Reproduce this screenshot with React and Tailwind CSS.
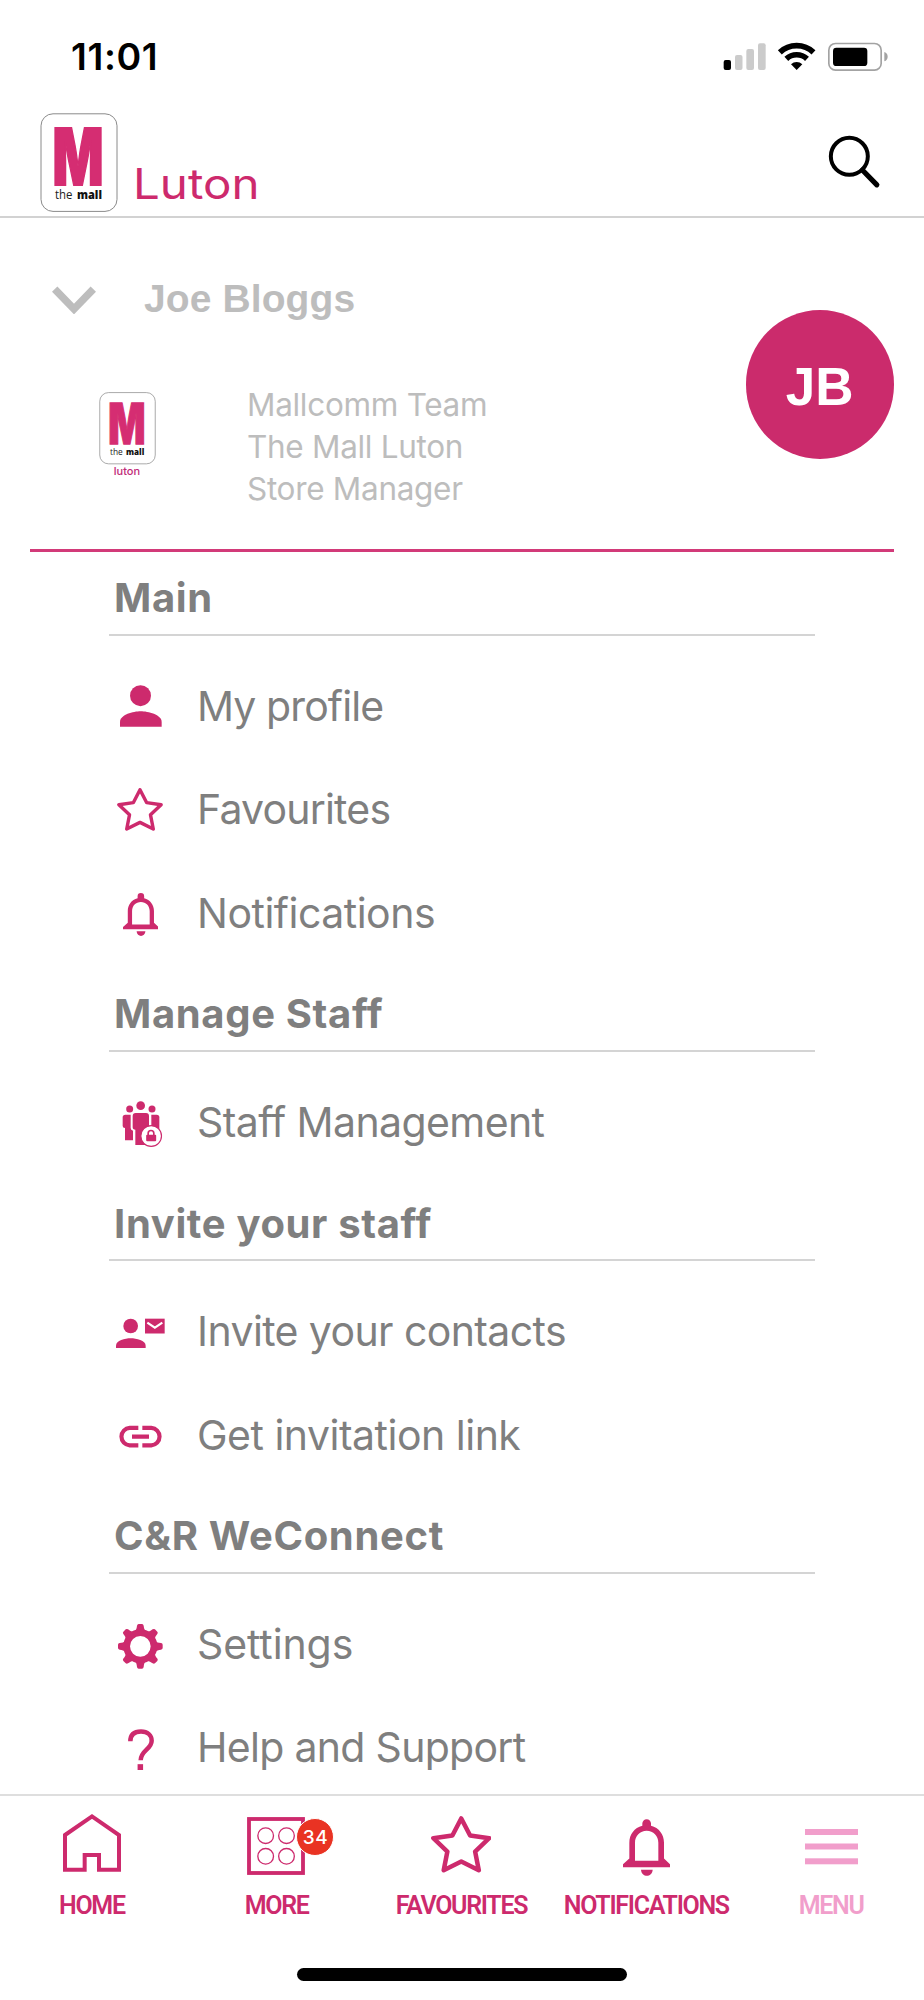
function MallLogo({ className }) {
  return (
    <svg className={`overflow-visible ${className}`} viewBox="0 0 78 100" fill="none">
      <rect x="1" y="0.800" width="76" height="97.600" rx="12" fill="#fff" stroke="#8a8a8a" strokeWidth="1" />
      <text
        x="11.500"
        y="71.700"
        transform="translate(14.6 0) scale(0.685 1) translate(-14.6 0)"
        fontFamily="Inter, sans-serif"
        fontWeight="900"
        fontSize="78"
        fill="#d52d72"
        stroke="#d52d72"
        strokeWidth="1.800"
      >
        M
      </text>
      <text x="15" y="86" fontFamily="'Open Sans', sans-serif" fontSize="13" fill="#222" textLength="17.500" lengthAdjust="spacingAndGlyphs">
        the
      </text>
      <text x="37" y="86" fontFamily="'Open Sans', sans-serif" fontWeight="800" fontSize="13" fill="#111" textLength="25" lengthAdjust="spacingAndGlyphs">
        mall
      </text>
    </svg>
  );
}

function Bell({ className }) {
  return (
    <svg className={className} viewBox="489 117 141 170" fill="currentColor">
      <path
        fillRule="evenodd"
        d="M547 137V130A13 13 0 0 1 573 130V137C597 143 612 163 612 188V235L630 252V261H489V252L508 235V188C508 163 523 143 547 137ZM525 242H595V188C595 167 580 152 560 152C540 152 525 167 525 188Z"
      />
      <path d="M543 269H578C577 281 569 287 560.500 287C552 287 544 281 543 269Z" />
    </svg>
  );
}

function Star({ className }) {
  return (
    <svg className={className} viewBox="1293 109 181 170" fill="none" stroke="currentColor" strokeWidth="13.500" strokeLinejoin="round">
      <path d="M1383.500 116L1410 167L1467 175L1425 215L1436 271L1383.500 245L1331 271L1342 215L1300 175L1357 167Z" />
    </svg>
  );
}

function PersonIcon() {
  return (
    <svg className="size-[60px] shrink-0" viewBox="60 348 180 180" fill="currentColor">
      <circle cx="151.500" cy="407" r="31.500" />
      <path d="M90 500V486C90 464 130 454 152 454C174 454 215 464 215 486V500Z" />
    </svg>
  );
}

function StaffIcon() {
  return (
    <svg className="size-[60px] shrink-0" viewBox="60 366 180 180" fill="currentColor">
      <circle cx="119" cy="414" r="10.500" />
      <circle cx="152" cy="404" r="13" />
      <circle cx="186" cy="414" r="10.500" />
      <path d="M98 439Q98 431 106 431H122V471Q122 478 129 479V508H105V471Q98 471 98 465Z" />
      <path d="M184 431H200Q208 431 208 439V480H184Z" />
      <path d="M128 435Q128 426 137 426H168Q177 426 177 435V470L168 522H136V476Q128 476 128 469Z" />
      <circle cx="183.500" cy="495" r="31" fill="#fff" stroke="currentColor" strokeWidth="3.500" />
      <rect x="168.500" y="491" width="30" height="20" rx="3" />
      <path d="M174.500 493V487A8.500 8.500 0 0 1 191.500 487V493" fill="none" stroke="currentColor" strokeWidth="5" />
    </svg>
  );
}

function ContactMailIcon() {
  return (
    <svg className="size-[60px] shrink-0" viewBox="60 94 180 180" fill="currentColor">
      <circle cx="122" cy="166" r="22" />
      <path d="M78 232V225C78 210 105 203 122 203C139 203 167 210 167 225V232Z" />
      <rect x="165" y="144" width="59" height="44.500" />
      <path d="M172 156L194.500 171L217 156" fill="none" stroke="#fff" strokeWidth="6.500" />
    </svg>
  );
}

function LinkIcon() {
  return (
    <svg className="size-[60px] shrink-0" viewBox="60 405 180 180" fill="none" stroke="currentColor" strokeWidth="12.500">
      <path d="M145 473.500H119A26.300 26.300 0 0 0 119 526H145M157 473.500H184A26.300 26.300 0 0 1 184 526H157M126 500H177" />
    </svg>
  );
}

function GearIcon() {
  return (
    <svg className="size-[60px] shrink-0" viewBox="60 73 180 180" fill="currentColor">
      <circle cx="151" cy="167" r="41" fill="none" stroke="currentColor" strokeWidth="20" />
      {[0, 45, 90, 135, 180, 225, 270, 315].map((angle) => (
        <path
          key={angle}
          transform={`rotate(${angle} 151 167)`}
          d="M134 122C139 118 140 113 141 105Q142 100 146 100H156Q160 100 161 105C162 113 163 118 168 122Z"
        />
      ))}
    </svg>
  );
}

function QuestionIcon() {
  return (
    <svg className="size-[60px] shrink-0" viewBox="60 384 180 180" fill="none" stroke="currentColor">
      <path d="M121 454C121 434 133 424.500 153 424.500C173 424.500 185 436 185 452C185 478 152 480 152 511" strokeWidth="13.500" />
      <path d="M151 522.500V540" strokeWidth="16.500" />
    </svg>
  );
}

function MenuStar() {
  return (
    <span className="flex size-[60px] shrink-0 items-center justify-center">
      <Star className="h-[43px] w-[46px]" />
    </span>
  );
}

function MenuBell() {
  return (
    <span className="flex size-[60px] shrink-0 items-center justify-center pl-px pt-[2px]">
      <Bell className="h-[43px] w-[35.500px]" />
    </span>
  );
}

const SECTIONS = [
  {
    title: 'Main',
    items: [
      { label: 'My profile', Icon: PersonIcon, tracking: 'tracking-[-0.9px]' },
      { label: 'Favourites', Icon: MenuStar, tracking: 'tracking-[-0.8px]' },
      { label: 'Notifications', Icon: MenuBell, tracking: 'tracking-[-0.5px]' },
    ],
  },
  { title: 'Manage Staff', items: [{ label: 'Staff Management', Icon: StaffIcon, tracking: 'tracking-[-0.6px]' }] },
  {
    title: 'Invite your staff',
    items: [
      { label: 'Invite your contacts', Icon: ContactMailIcon, tracking: 'tracking-[-0.6px]' },
      { label: 'Get invitation link', Icon: LinkIcon, tracking: 'tracking-[-0.5px]' },
    ],
  },
  {
    title: 'C&R WeConnect',
    items: [
      { label: 'Settings', Icon: GearIcon, tracking: 'tracking-[-0.1px]' },
      { label: 'Help and Support', Icon: QuestionIcon, tracking: 'tracking-[-0.7px]' },
    ],
  },
];

function StatusBar() {
  return (
    <div className="flex h-[88px] shrink-0 items-start justify-between pl-[71px] pr-[34px] pt-[36px]">
      <span className="text-[37.500px] font-semibold leading-[42px] tracking-[0.6px] text-black">11:01</span>
      <svg className="h-[42px] w-[168px]" viewBox="98 108 504 126">
        <rect x="103" y="180" width="22" height="30" rx="6" />
        <g fill="#cbcbcb">
          <rect x="137" y="165" width="22.500" height="45" rx="6" />
          <rect x="171" y="147" width="23" height="63" rx="6" />
          <rect x="206" y="130" width="23" height="80" rx="6" />
        </g>
        <path
          d="M271.500 157A73 73 0 0 1 372.500 157M291 176.500A45.500 45.500 0 0 1 353 176.500"
          fill="none"
          stroke="#000"
          strokeWidth="17"
        />
        <path d="M322 210L305 193A25 25 0 0 1 339 193Z" />
        <rect x="418.500" y="130.500" width="157" height="80" rx="20" fill="none" stroke="#a3a3a3" strokeWidth="5" />
        <rect x="431" y="143" width="103" height="55" rx="10" />
        <path d="M585 156Q595 160 595 170Q595 180 585 184Z" fill="#a3a3a3" />
      </svg>
    </div>
  );
}

function Header() {
  return (
    <header className="flex h-[130px] shrink-0 items-start border-b-2 border-[#d2d2d2] pl-[40px] pr-[42px] pt-[25px]">
      <MallLogo className="h-[100px] w-[78px]" />
      <span className="ml-[14.500px] mt-[46px] origin-left scale-x-[1.13] text-[42px] leading-[50px] text-[#cd2a6d]">Luton</span>
      <svg className="ml-auto mt-[22px] h-[54px] w-[54px]" viewBox="415 405 162 162" fill="none" stroke="#000">
        <circle cx="479" cy="469" r="55.500" strokeWidth="12" />
        <path d="M518 510L561.500 554.500" strokeWidth="15.500" strokeLinecap="round" />
      </svg>
    </header>
  );
}

function Profile() {
  return (
    <section className="mx-[30px] flex h-[334px] shrink-0 items-start justify-between border-b-[3px] border-[#d23a79] text-[#bdbdbd]">
      <div>
        <div className="flex items-start pt-[57px]">
          <svg className="ml-[22px] mt-[11px] h-[28px] w-[44px]" viewBox="0 0 44 28" fill="none" stroke="currentColor" strokeWidth="7.500">
            <path d="M2.700 3.200L22 23L41.300 3.200" />
          </svg>
          <h1 className="ml-[48px] mt-px font-['Liberation_Sans',sans-serif] text-[39px] font-bold leading-[46px] tracking-[0.1px]">Joe Bloggs</h1>
        </div>
        <div className="mt-[62px] flex items-start">
          <div className="ml-[68px] mt-[8px] flex w-[58px] flex-col items-center">
            <MallLogo className="h-[73px] w-[57px]" />
            <span className="mt-[-2px] text-[11px] font-medium leading-[16px] text-[#c02a78]">luton</span>
          </div>
          <p className="ml-[91px] text-[31.500px] font-normal leading-[42px] tracking-[-0.3px]">
            Mallcomm Team
            <br />
            The Mall Luton
            <br />
            Store Manager
          </p>
        </div>
      </div>
      <div className="mt-[92px] flex size-[148.500px] items-center justify-center rounded-full bg-[#cb2b6c] pt-[4px] font-['Liberation_Sans',sans-serif] text-[53px] font-bold leading-none text-white">
        JB
      </div>
    </section>
  );
}

function Menu() {
  return (
    <main className="min-h-0 flex-1 overflow-hidden pl-[108.500px] pr-[109px] text-[#7f7f7f]">
      {SECTIONS.map(({ title, items }) => (
        <section key={title} className="pb-[3.300px]">
          <h2 className="flex h-[83.500px] items-end border-b-2 border-[#d4d4d4] pb-[11.500px] pl-[5.500px] text-[40px] font-bold leading-[48px] tracking-[0.65px]">
            {title}
          </h2>
          <ul className="pt-[19px]">
            {items.map(({ label, Icon, tracking }) => (
              <li key={label} className="flex h-[103.500px] items-center gap-[27px] pl-[1.500px] text-[41px] font-normal">
                <span className="text-[#cd2a6d]">
                  <Icon />
                </span>
                <span className={`whitespace-nowrap ${tracking}`}>{label}</span>
              </li>
            ))}
          </ul>
        </section>
      ))}
    </main>
  );
}

function Tab({ label, active, children }) {
  return (
    <div className={`flex w-[184.800px] flex-col items-center ${active ? 'text-[#f19ecb]' : 'text-[#cd2a6d]'}`}>
      <div className="flex h-[95px] items-start">{children}</div>
      <span className="mr-px font-[Roboto,sans-serif] text-[25px] font-semibold leading-[30px] tracking-[-1.300px]">{label}</span>
    </div>
  );
}

function TabBar() {
  return (
    <nav className="flex h-[206px] shrink-0 flex-col border-t-2 border-[#dedede]">
      <div className="flex">
        <Tab label="HOME">
          <svg className="mt-[17px] h-[60px] w-[60px]" viewBox="186 99 180 180" fill="none" stroke="currentColor" strokeWidth="12">
            <path d="M195 165L276 109L357 165V269H297V225H254V269H195Z" />
          </svg>
        </Tab>
        <Tab label="MORE">
          <div className="relative mr-[1.500px] mt-[21px] size-[58px]">
            <svg className="size-[58px]" viewBox="741 112 174 174" fill="none" stroke="currentColor">
              <rect x="747" y="118" width="162" height="162" strokeWidth="11.500" />
              <g strokeWidth="4">
                <circle cx="797" cy="168" r="23.500" />
                <circle cx="859.500" cy="168" r="23.500" />
                <circle cx="797" cy="230" r="23.500" />
                <circle cx="859.500" cy="230" r="23.500" />
              </g>
            </svg>
            <span className="absolute left-[49px] top-[1px] flex size-[38px] items-center justify-center rounded-full border-[1.500px] border-white bg-[#e93323] text-[19px] font-medium leading-none tracking-[0.5px] text-white">
              34
            </span>
          </div>
        </Tab>
        <Tab label="FAVOURITES">
          <Star className="mr-[2px] mt-[20px] h-[57px] w-[60.500px]" />
        </Tab>
        <Tab label="NOTIFICATIONS">
          <Bell className="mt-[23px] h-[57px] w-[47px]" />
        </Tab>
        <Tab label="MENU" active>
          <svg className="mt-[33px] h-[36px] w-[53px]" viewBox="0 0 53 36" fill="currentColor">
            <rect y="0" width="53" height="6" />
            <rect y="14.500" width="53" height="6" />
            <rect y="29.300" width="53" height="6" />
          </svg>
        </Tab>
      </div>
      <div className="mx-auto mb-[19.500px] mt-auto h-[12.500px] w-[330px] rounded-full bg-black" />
    </nav>
  );
}

export default function App() {
  return (
    <div className="flex h-[2000px] w-[924px] flex-col overflow-hidden bg-white font-[Inter,sans-serif]">
      <StatusBar />
      <Header />
      <Profile />
      <Menu />
      <TabBar />
    </div>
  );
}
